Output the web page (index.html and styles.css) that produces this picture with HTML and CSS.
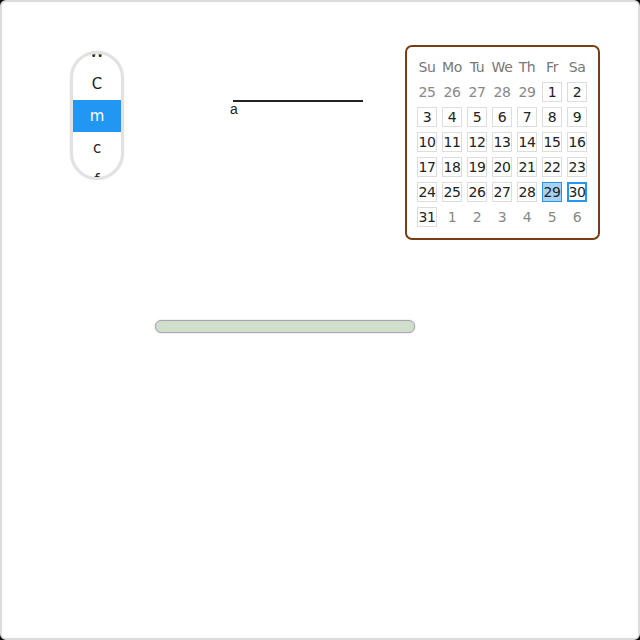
FILE: index.html
```html
<!DOCTYPE html>
<html lang="en">
<head>
    <title>Widgets</title>
    <link rel="stylesheet" href="styles.css">
</head>
<body>
    <div class="frame">
        <div class="top_row">
            <div class="picker">
                <ul class="picker_list">
                    <li>W</li>
                    <li>C</li>
                    <li class="selected">m</li>
                    <li>c</li>
                    <li>f</li>
                </ul>
            </div>

            <div class="line_field">
                <span class="line_label">a</span>
            </div>

            <div class="calendar">
                <div class="cal_grid">
                    <span class="wd">Su</span><span class="wd">Mo</span><span class="wd">Tu</span><span class="wd">We</span><span class="wd">Th</span><span class="wd">Fr</span><span class="wd">Sa</span>
                    <span class="other">25</span><span class="other">26</span><span class="other">27</span><span class="other">28</span><span class="other">29</span><span class="day">1</span><span class="day">2</span>
                    <span class="day">3</span><span class="day">4</span><span class="day">5</span><span class="day">6</span><span class="day">7</span><span class="day">8</span><span class="day">9</span>
                    <span class="day">10</span><span class="day">11</span><span class="day">12</span><span class="day">13</span><span class="day">14</span><span class="day">15</span><span class="day">16</span>
                    <span class="day">17</span><span class="day">18</span><span class="day">19</span><span class="day">20</span><span class="day">21</span><span class="day">22</span><span class="day">23</span>
                    <span class="day">24</span><span class="day">25</span><span class="day">26</span><span class="day">27</span><span class="day">28</span><span class="day picked">29</span><span class="day today">30</span>
                    <span class="day">31</span><span class="other">1</span><span class="other">2</span><span class="other">3</span><span class="other">4</span><span class="other">5</span><span class="other">6</span>
                </div>
            </div>
        </div>

        <div class="slider_row">
            <div class="slider"></div>
        </div>
    </div>
</body>
</html>
```

FILE: styles.css
```css
html {
    background-color: #000;
}
body {
    margin: 0;
    padding: 0;
    font-family: "DejaVu Sans", sans-serif;
}
.frame {
    box-sizing: border-box;
    width: 640px;
    height: 640px;
    background-color: #fff;
    border: 2px solid #dcdcdc;
    border-radius: 6px;
}
.top_row {
    display: flex;
    align-items: flex-start;
    padding-top: 43px;
    padding-left: 68px;
}

/* picker */
.picker {
    box-sizing: border-box;
    width: 54px;
    height: 129px;
    margin-top: 6px;
    border: 3px solid #e2e2e2;
    border-radius: 27px;
    box-shadow: 0 0 1px #a9d18e;
    overflow: hidden;
}
.picker_list {
    list-style: none;
    margin: -18px 0 0 0;
    padding: 0;
}
.picker_list li {
    height: 32px;
    line-height: 32px;
    text-align: center;
    font-size: 15px;
    color: #222;
}
.picker_list li.selected {
    background-color: #2196f3;
    color: #fff;
}

/* line field */
.line_field {
    width: 130px;
    margin-left: 109px;
    margin-top: 55px;
    border-top: 2px solid #222;
}
.line_label {
    display: block;
    margin-left: -3px;
    font-family: "Liberation Sans", Arial, sans-serif;
    font-size: 14px;
    line-height: 14px;
    color: #222;
}

/* calendar */
.calendar {
    box-sizing: border-box;
    width: 195px;
    height: 195px;
    margin-left: 42px;
    padding: 10px 11px 11px 10px;
    border: 2px solid #7a3d12;
    border-radius: 7px;
}
.cal_grid {
    display: grid;
    grid-template-columns: repeat(7, 20px);
    grid-auto-rows: 20px;
    gap: 5px;
    font-size: 14px;
}
.cal_grid span {
    box-sizing: border-box;
    display: flex;
    align-items: center;
    justify-content: center;
    white-space: nowrap;
    letter-spacing: -0.4px;
}
.wd {
    color: #777;
}
.other {
    color: #888;
}
.day {
    color: #222;
    border: 1px solid #ddd;
}
.day.picked {
    background-color: #a6d2f6;
    border-color: #2196f3;
}
.day.today {
    border: 2px solid #2196f3;
}

/* slider */
.slider_row {
    padding-left: 153px;
    padding-top: 80px;
}
.slider {
    box-sizing: border-box;
    width: 260px;
    height: 13px;
    background-color: #d0dfcc;
    border: 1px solid #a8a4ae;
    border-radius: 6px;
    box-shadow: 0 0 2px #d9c8f0;
}
```
